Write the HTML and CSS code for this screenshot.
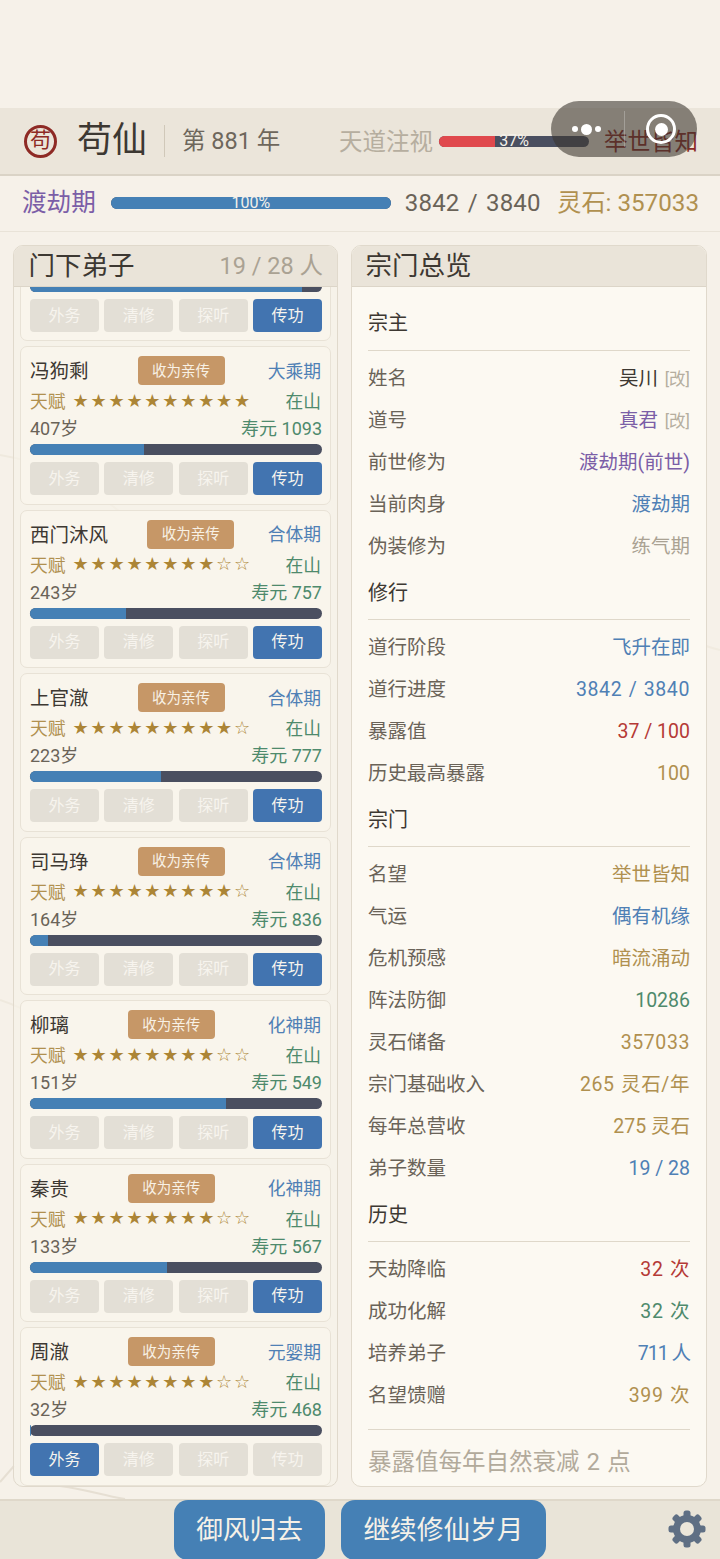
FILE: index.html
```html
<!DOCTYPE html>
<html lang="zh-CN">
<head>
    <meta charset="UTF-8">
    <meta name="viewport" content="width=device-width, initial-scale=1.0">
    <title>苟仙</title>
    <link rel="stylesheet" href="styles.css">
</head>
<body>
    <svg class="ink-bg" width="720" height="1559" viewBox="0 0 720 1559" fill="none">
        <path d="M0 455 C40 462 70 470 130 520 M0 1000 C60 1020 90 1060 150 1100" stroke="#efe9de" stroke-width="2"/>
        <path d="M60 1486 C90 1490 100 1495 125 1499 M0 1482 L14 1466" stroke="#e6dfd3" stroke-width="2"/>
        <path d="M470 520 C520 530 570 560 620 610 C650 620 680 640 720 650" stroke="#f1ebe0" stroke-width="2"/>
    </svg>

    <div class="status-gap"></div>

    <div class="capsule">
        <div class="capsule-dots"><i></i><i class="big"></i><i></i></div>
        <div class="capsule-line"></div>
        <div class="capsule-ring"><i></i></div>
    </div>

    <header class="top-bar">
        <div class="seal">苟</div>
        <div class="game-title">苟仙</div>
        <div class="year">第 881 年</div>
        <div class="gaze">
            <span class="gaze-label">天道注视</span>
            <div class="bar gaze-bar">
                <div class="bar-fill fill-red" style="width: 37%"></div>
                <span class="bar-text">37%</span>
            </div>
            <span class="gaze-state">举世皆知</span>
        </div>
    </header>

    <div class="realm-bar">
        <span class="realm-name">渡劫期</span>
        <div class="bar realm-progress">
            <div class="bar-fill fill-blue fill-full" style="width: 100%"></div>
            <span class="bar-text">100%</span>
        </div>
        <span class="realm-count">3842 / 3840</span>
        <span class="realm-stone">灵石: 357033</span>
    </div>

    <main class="panels">
        <section class="panel panel-left">
            <div class="panel-head">
                <span class="panel-title">门下弟子</span>
                <span class="panel-count">19 / 28 人</span>
            </div>
            <div class="disciple-list">
                <div class="card card-partial">
                    <div class="bar card-bar"><div class="bar-fill fill-blue" style="width: 93%"></div></div>
                    <div class="actions"><button>外务</button><button>清修</button><button>探听</button><button class="on">传功</button></div>
                </div>
                <div class="card">
                    <div class="card-top"><span class="name">冯狗剩</span><button class="apprentice">收为亲传</button><span class="realm blue">大乘期</span></div>
                    <div class="card-row"><span class="talent"><em>天赋</em> <span class="stars">★★★★★★★★★★</span></span><span class="where">在山</span></div>
                    <div class="card-row"><span class="age">407岁</span><span class="life">寿元 1093</span></div>
                    <div class="bar card-bar"><div class="bar-fill fill-blue" style="width: 39%"></div></div>
                    <div class="actions"><button>外务</button><button>清修</button><button>探听</button><button class="on">传功</button></div>
                </div>
                <div class="card">
                    <div class="card-top"><span class="name">西门沐风</span><button class="apprentice">收为亲传</button><span class="realm blue">合体期</span></div>
                    <div class="card-row"><span class="talent"><em>天赋</em> <span class="stars">★★★★★★★★☆☆</span></span><span class="where">在山</span></div>
                    <div class="card-row"><span class="age">243岁</span><span class="life">寿元 757</span></div>
                    <div class="bar card-bar"><div class="bar-fill fill-blue" style="width: 33%"></div></div>
                    <div class="actions"><button>外务</button><button>清修</button><button>探听</button><button class="on">传功</button></div>
                </div>
                <div class="card">
                    <div class="card-top"><span class="name">上官澈</span><button class="apprentice">收为亲传</button><span class="realm blue">合体期</span></div>
                    <div class="card-row"><span class="talent"><em>天赋</em> <span class="stars">★★★★★★★★★☆</span></span><span class="where">在山</span></div>
                    <div class="card-row"><span class="age">223岁</span><span class="life">寿元 777</span></div>
                    <div class="bar card-bar"><div class="bar-fill fill-blue" style="width: 45%"></div></div>
                    <div class="actions"><button>外务</button><button>清修</button><button>探听</button><button class="on">传功</button></div>
                </div>
                <div class="card">
                    <div class="card-top"><span class="name">司马琤</span><button class="apprentice">收为亲传</button><span class="realm blue">合体期</span></div>
                    <div class="card-row"><span class="talent"><em>天赋</em> <span class="stars">★★★★★★★★★☆</span></span><span class="where">在山</span></div>
                    <div class="card-row"><span class="age">164岁</span><span class="life">寿元 836</span></div>
                    <div class="bar card-bar"><div class="bar-fill fill-blue" style="width: 6%"></div></div>
                    <div class="actions"><button>外务</button><button>清修</button><button>探听</button><button class="on">传功</button></div>
                </div>
                <div class="card">
                    <div class="card-top"><span class="name">柳璃</span><button class="apprentice">收为亲传</button><span class="realm blue">化神期</span></div>
                    <div class="card-row"><span class="talent"><em>天赋</em> <span class="stars">★★★★★★★★☆☆</span></span><span class="where">在山</span></div>
                    <div class="card-row"><span class="age">151岁</span><span class="life">寿元 549</span></div>
                    <div class="bar card-bar"><div class="bar-fill fill-blue" style="width: 67%"></div></div>
                    <div class="actions"><button>外务</button><button>清修</button><button>探听</button><button class="on">传功</button></div>
                </div>
                <div class="card">
                    <div class="card-top"><span class="name">秦贵</span><button class="apprentice">收为亲传</button><span class="realm blue">化神期</span></div>
                    <div class="card-row"><span class="talent"><em>天赋</em> <span class="stars">★★★★★★★★☆☆</span></span><span class="where">在山</span></div>
                    <div class="card-row"><span class="age">133岁</span><span class="life">寿元 567</span></div>
                    <div class="bar card-bar"><div class="bar-fill fill-blue" style="width: 47%"></div></div>
                    <div class="actions"><button>外务</button><button>清修</button><button>探听</button><button class="on">传功</button></div>
                </div>
                <div class="card">
                    <div class="card-top"><span class="name">周澈</span><button class="apprentice">收为亲传</button><span class="realm blue">元婴期</span></div>
                    <div class="card-row"><span class="talent"><em>天赋</em> <span class="stars">★★★★★★★★☆☆</span></span><span class="where">在山</span></div>
                    <div class="card-row"><span class="age">32岁</span><span class="life">寿元 468</span></div>
                    <div class="bar card-bar"><div class="bar-fill fill-blue" style="width: 0.5%"></div></div>
                    <div class="actions"><button class="on">外务</button><button>清修</button><button>探听</button><button>传功</button></div>
                </div>
            </div>
        </section>

        <section class="panel panel-right">
            <div class="panel-head">
                <span class="panel-title">宗门总览</span>
            </div>
            <div class="overview">
                <h3 class="section-title first">宗主</h3>
                <div class="stat"><span>姓名</span><b class="dark">吴川 <small>[改]</small></b></div>
                <div class="stat"><span>道号</span><b class="purple">真君 <small>[改]</small></b></div>
                <div class="stat"><span>前世修为</span><b class="purple">渡劫期(前世)</b></div>
                <div class="stat"><span>当前肉身</span><b class="blue">渡劫期</b></div>
                <div class="stat"><span>伪装修为</span><b class="gray">练气期</b></div>

                <h3 class="section-title">修行</h3>
                <div class="stat"><span>道行阶段</span><b class="blue">飞升在即</b></div>
                <div class="stat"><span>道行进度</span><b class="blue num">3842 / 3840</b></div>
                <div class="stat"><span>暴露值</span><b class="red">37 / 100</b></div>
                <div class="stat"><span>历史最高暴露</span><b class="gold">100</b></div>

                <h3 class="section-title">宗门</h3>
                <div class="stat"><span>名望</span><b class="gold">举世皆知</b></div>
                <div class="stat"><span>气运</span><b class="blue">偶有机缘</b></div>
                <div class="stat"><span>危机预感</span><b class="gold">暗流涌动</b></div>
                <div class="stat"><span>阵法防御</span><b class="green">10286</b></div>
                <div class="stat"><span>灵石储备</span><b class="gold num">357033</b></div>
                <div class="stat"><span>宗门基础收入</span><b class="gold num">265 灵石/年</b></div>
                <div class="stat"><span>每年总营收</span><b class="gold">275 灵石</b></div>
                <div class="stat"><span>弟子数量</span><b class="blue">19 / 28</b></div>

                <h3 class="section-title">历史</h3>
                <div class="stat"><span>天劫降临</span><b class="red num">32 次</b></div>
                <div class="stat"><span>成功化解</span><b class="green num">32 次</b></div>
                <div class="stat"><span>培养弟子</span><b class="blue narrow">711 人</b></div>
                <div class="stat"><span>名望馈赠</span><b class="gold num">399 次</b></div>

                <p class="note">暴露值每年自然衰减 2 点</p>
            </div>
        </section>
    </main>

    <footer class="bottom-bar">
        <button class="big-btn btn-leave">御风归去</button>
        <button class="big-btn btn-next">继续修仙岁月</button>
        <svg class="gear" width="38" height="38" viewBox="0 0 38 38">
            <g fill="#5f6f84">
                <rect x="15.5" y="0.5" width="7" height="37" rx="2.5"/>
                <rect x="15.5" y="0.5" width="7" height="37" rx="2.5" transform="rotate(45 19 19)"/>
                <rect x="15.5" y="0.5" width="7" height="37" rx="2.5" transform="rotate(90 19 19)"/>
                <rect x="15.5" y="0.5" width="7" height="37" rx="2.5" transform="rotate(135 19 19)"/>
            </g>
            <circle cx="19" cy="19" r="10.5" fill="none" stroke="#5f6f84" stroke-width="7"/>
            <circle cx="19" cy="19" r="7" fill="#ebe6da"/>
        </svg>
    </footer>
</body>
</html>
```

FILE: styles.css
```css
* {
    margin: 0;
    padding: 0;
    box-sizing: border-box;
}
html, body {
    width: 720px;
    height: 1559px;
    overflow: hidden;
}
body {
    position: relative;
    display: flex;
    flex-direction: column;
    background: #f6f1e9;
    color: #3d3832;
    font-family: Roboto, "Noto Sans CJK SC", sans-serif;
}
button {
    font-family: inherit;
    border: none;
}
.ink-bg {
    position: absolute;
    top: 0;
    left: 0;
}
.status-gap {
    height: 108px;
}

/* wechat capsule sits over the header */
.capsule {
    position: absolute;
    top: 101px;
    left: 551px;
    width: 146px;
    height: 56px;
    border-radius: 28px;
    background: rgba(58, 54, 46, 0.58);
    z-index: 5;
}
.capsule-dots {
    position: absolute;
    left: 21px;
    top: 0;
    height: 56px;
    display: flex;
    align-items: center;
    gap: 3px;
}
.capsule-dots i {
    width: 6px;
    height: 6px;
    border-radius: 50%;
    background: #fff;
}
.capsule-dots i.big {
    width: 11px;
    height: 11px;
}
.capsule-line {
    position: absolute;
    left: 73px;
    top: 10px;
    width: 1px;
    height: 36px;
    background: rgba(255, 255, 255, 0.25);
}
.capsule-ring {
    position: absolute;
    left: 95px;
    top: 13px;
    width: 30px;
    height: 30px;
    border: 3px solid #fff;
    border-radius: 50%;
    display: flex;
    align-items: center;
    justify-content: center;
}
.capsule-ring i {
    width: 13px;
    height: 13px;
    border-radius: 50%;
    background: #fff;
}

.top-bar {
    position: relative;
    height: 68px;
    display: flex;
    align-items: center;
    padding: 0 22px 0 24px;
    background: #ebe5da;
    border-bottom: 2px solid #dad3c6;
}
.seal {
    width: 33px;
    height: 33px;
    margin-top: 1px;
    border: 3px solid #8e2a25;
    border-radius: 50%;
    color: #8e2a25;
    font-size: 21px;
    line-height: 25px;
    text-align: center;
}
.game-title {
    margin-left: 20px;
    font-size: 35px;
    line-height: 44px;
    color: #3d3832;
}
.year {
    margin-left: 17px;
    padding-left: 17px;
    border-left: 1px solid #d0c8b9;
    font-size: 23.5px;
    line-height: 32px;
    color: #6e675c;
}
.gaze {
    margin-left: auto;
    display: flex;
    align-items: center;
}
.gaze-label {
    padding-bottom: 2px;
    font-size: 23.5px;
    color: #b6ae9f;
}
.gaze-state {
    margin-left: 15px;
    padding-bottom: 2px;
    font-size: 23.5px;
    color: #8b2a25;
}

.bar {
    position: relative;
    background: #4a4f60;
    border-radius: 6px;
}
.bar-fill {
    height: 100%;
    border-radius: 6px 0 0 6px;
}
.fill-full {
    border-radius: 6px;
}
.fill-blue {
    background: #4580b5;
}
.fill-red {
    background: #e0494d;
}
.bar-text {
    position: absolute;
    top: 50%;
    left: 0;
    width: 100%;
    text-align: center;
    transform: translateY(-50%);
    color: #f4f1ea;
    font-size: 16px;
    line-height: 16px;
}
.gaze-bar {
    width: 150px;
    height: 11px;
    margin-left: 6px;
}

.realm-bar {
    height: 56px;
    display: flex;
    align-items: center;
    padding: 0 22px 2px;
    line-height: 30px;
    border-bottom: 1px solid #e9e3d8;
    position: relative;
}
.realm-name {
    font-size: 24.6px;
    color: #7b5ea7;
}
.realm-progress {
    width: 280px;
    height: 12px;
    margin-left: 15px;
}
.realm-count {
    margin-left: 14px;
    font-size: 24px;
    letter-spacing: 0.2px;
    word-spacing: 2px;
    color: #6a6358;
}
.realm-stone {
    margin-left: auto;
    margin-right: -1px;
    font-size: 24.2px;
    color: #b0904f;
}

.panels {
    position: relative;
    flex: 1;
    min-height: 0;
    display: flex;
    gap: 13px;
    padding: 13px 13px 12px;
}
.panel {
    display: flex;
    flex-direction: column;
    border: 1px solid #e0d9cc;
    border-radius: 10px;
    overflow: hidden;
}
.panel-left {
    width: 325px;
    background: rgba(247, 243, 234, 0.6);
}
.panel-right {
    width: 356px;
    background: #fcf9f2;
}
.panel-head {
    flex: none;
    height: 41px;
    display: flex;
    align-items: center;
    justify-content: space-between;
    padding: 0 14px 5px 13.5px;
    background: #eae4d9;
    border-bottom: 1px solid #dcd5c8;
}
.panel-left .panel-head {
    padding-left: 14.5px;
}
.panel-title {
    font-size: 26.5px;
    color: #3d3832;
}
.panel-count {
    font-size: 23.5px;
    color: #aaa293;
}

.disciple-list {
    flex: 1;
    min-height: 0;
    overflow: hidden;
    padding: 0 6px;
    display: flex;
    flex-direction: column;
    gap: 5px;
}
.card {
    flex: none;
    height: 158.5px;
    padding: 9px 8px 0 9px;
    background: #f9f5ec;
    border: 1px solid #e8e2d6;
    border-radius: 7px;
}
/* first card is scrolled mostly out of view */
.card-partial {
    height: 66px;
    margin-top: -12px;
    padding-top: 2.5px;
}
.card-top {
    height: 29px;
    display: flex;
    align-items: center;
    justify-content: space-between;
    margin-bottom: 2.5px;
}
.name {
    padding-bottom: 2px;
    font-size: 19.5px;
    color: #3d3832;
}
.apprentice {
    width: 87px;
    height: 29px;
    margin-left: 6px;
    padding-bottom: 3px;
    border-radius: 4px;
    background: #c69767;
    color: #f8f1e5;
    font-size: 14.5px;
}
.realm {
    padding-right: 1px;
    padding-bottom: 2px;
    font-size: 17.8px;
}
.card-row {
    height: 27px;
    display: flex;
    align-items: center;
    justify-content: space-between;
    padding-bottom: 2px;
}
.talent {
    display: flex;
    align-items: center;
}
.talent em {
    font-style: normal;
    font-size: 17.8px;
    color: #b0904f;
}
.stars {
    margin-left: 7px;
    font-family: "DejaVu Sans", sans-serif;
    font-size: 18px;
    letter-spacing: 1.8px;
    color: #ac8536;
}
.where {
    padding-right: 1px;
    font-size: 17.8px;
    color: #4e8a6c;
}
.age {
    font-size: 18px;
    color: #6a6358;
}
.life {
    font-size: 18px;
    color: #4e8a6c;
}
.card-bar {
    height: 11px;
    margin-top: 2.5px;
}
.actions {
    display: flex;
    gap: 5.5px;
    margin-top: 7px;
}
.actions button {
    flex: 1;
    height: 33px;
    padding-bottom: 4px;
    border-radius: 4px;
    background: #e3dfd6;
    color: #f7f4ee;
    font-size: 16px;
}
.actions button.on {
    background: #4274b0;
}

.overview {
    flex: 1;
    padding: 0 16px;
}
.section-title {
    height: 52px;
    padding-top: 11px;
    margin-bottom: 7.5px;
    border-bottom: 1px solid #dfd8ca;
    font-weight: 400;
    font-size: 20px;
    line-height: 28px;
    color: #3d3832;
}
.section-title.first {
    height: 64px;
    padding-top: 22px;
}
.stat {
    height: 41.9px;
    display: flex;
    align-items: center;
    justify-content: space-between;
    font-size: 19.5px;
    line-height: 28px;
    color: #6a6358;
}
.stat b {
    font-weight: 400;
}
.stat b.num {
    letter-spacing: 0.6px;
    word-spacing: 1px;
}
.stat b.narrow {
    letter-spacing: -1px;
}
.stat small {
    margin-left: 2px;
    font-size: 16.5px;
    color: #b5ae9f;
}
.note {
    margin-top: 12px;
    border-top: 1px solid #dfd8ca;
    padding-top: 13px;
    font-size: 23.5px;
    word-spacing: 1.5px;
    color: #b2aa9b;
}
.dark { color: #3d3832; }
.blue { color: #4f80b5; }
.purple { color: #7b5ea7; }
.gray { color: #aaa293; }
.red { color: #b53a36; }
.gold { color: #b0904f; }
.green { color: #4e8a6c; }

.bottom-bar {
    position: relative;
    height: 60px;
    display: flex;
    padding-left: 174px;
    background: #e9e4d8;
    border-top: 2px solid #dfd8ca;
}
.big-btn {
    height: 60px;
    margin-top: -1px;
    padding-bottom: 5px;
    border-radius: 14px;
    background: #4580b5;
    color: #f5f1e8;
    font-size: 26.7px;
}
.btn-leave {
    width: 151px;
}
.btn-next {
    width: 205px;
    margin-left: 16px;
}
.gear {
    margin-left: auto;
    margin-right: 14px;
    margin-top: 9px;
}
```
